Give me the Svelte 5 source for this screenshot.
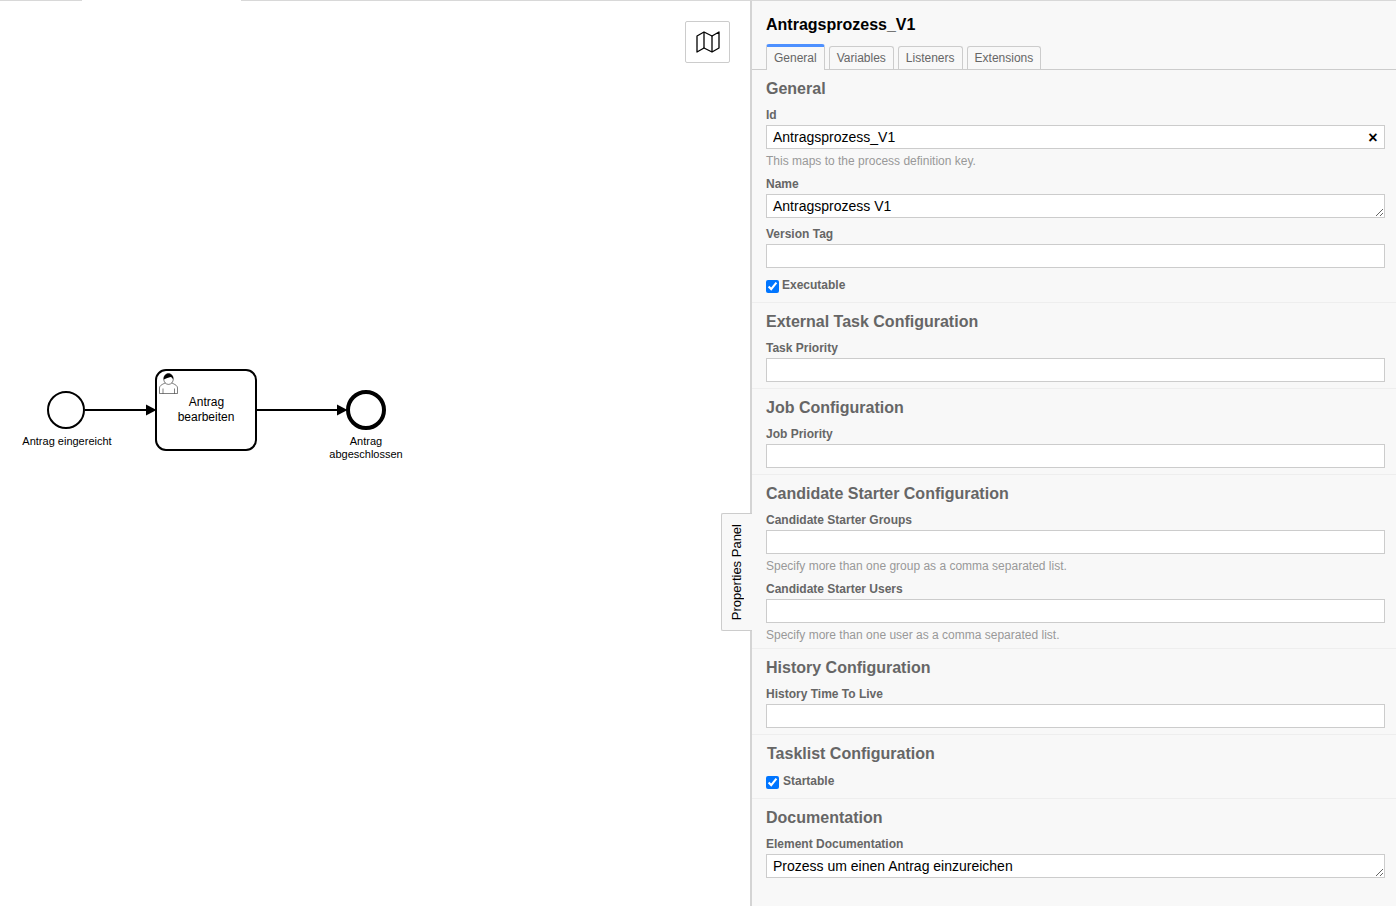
<script lang="ts">
  const tabs = ["General", "Variables", "Listeners", "Extensions"];
</script>

<div class="app">
  <main class="canvas">
    <div class="topline"><span class="seg first"></span><span class="gap"></span><span class="seg"></span></div>

    <svg class="diagram" width="750" height="906" viewBox="0 0 750 906" aria-label="Process diagram">
      <circle cx="66" cy="410" r="18" class="shape" stroke-width="2" />
      <text class="lbl" x="67" y="445">Antrag eingereicht</text>

      <rect x="156" y="370" width="100" height="80" rx="10" class="shape" stroke-width="2" />
      <g class="user">
        <path d="M159.5 393.5 v-5.5 c0 -3 4 -4 6.5 -5.5 h5 c2.5 1.5 6.5 2.5 6.5 5.5 v5.5 z" />
        <path d="M163 388.5 v5 M174.5 388.5 v5" />
        <ellipse cx="168.5" cy="379" rx="4.8" ry="5.4" />
        <path class="hair" d="M163.8 379.5 c-.5 -3.5 2 -6 4.7 -6 c2.7 0 5.2 2.5 4.7 6 c-.8 -1.6 -1.6 -2.4 -2.6 -2.6 c-2 1 -4.6 1 -6.8 2.6 z" />
      </g>
      <text class="lbl task" x="206.5" y="406">Antrag</text>
      <text class="lbl task" x="206" y="421">bearbeiten</text>

      <circle cx="366" cy="410" r="18" class="shape" stroke-width="4" />
      <text class="lbl" x="366" y="445">Antrag</text>
      <text class="lbl" x="366" y="458">abgeschlossen</text>

      <path class="flow" d="M85 410 H147" />
      <path class="head" d="M146 404.5 L156.5 410 L146 415.5 Z" />
      <path class="flow" d="M257 410 H338" />
      <path class="head" d="M337 404.5 L347.5 410 L337 415.5 Z" />
    </svg>

    <button class="map-btn" aria-label="Toggle minimap">
      <svg width="24" height="24" viewBox="0 0 24 24" fill="none" stroke="#000" stroke-width="1.3" stroke-linejoin="round">
        <polygon points="1 6 1 22 8 18 16 22 23 18 23 2 16 6 8 2 1 6" />
        <line x1="8" y1="2" x2="8" y2="18" />
        <line x1="16" y1="6" x2="16" y2="22" />
      </svg>
    </button>
  </main>

  <aside class="panel">
    <div class="toggle"><span>Properties Panel</span></div>

    <h2 class="title">Antragsprozess_V1</h2>

    <nav class="tabs">
      {#each tabs as tab, i}
        <button class="tab" class:active={i === 0}>{tab}</button>
      {/each}
    </nav>

    <section class="group">
      <h3>General</h3>
      <div class="field">
        <label for="f-id">Id</label>
        <div class="clearable">
          <input id="f-id" value="Antragsprozess_V1" />
          <button class="clear" aria-label="Clear">×</button>
        </div>
        <p class="desc">This maps to the process definition key.</p>
      </div>
      <div class="field">
        <label for="f-name">Name</label>
        <textarea id="f-name">Antragsprozess V1</textarea>
      </div>
      <div class="field">
        <label for="f-version">Version Tag</label>
        <input id="f-version" />
      </div>
      <div class="field check">
        <input id="f-exec" type="checkbox" checked />
        <label for="f-exec">Executable</label>
      </div>
    </section>

    <section class="group">
      <h3>External Task Configuration</h3>
      <div class="field">
        <label for="f-task">Task Priority</label>
        <input id="f-task" />
      </div>
    </section>

    <section class="group">
      <h3>Job Configuration</h3>
      <div class="field">
        <label for="f-job">Job Priority</label>
        <input id="f-job" />
      </div>
    </section>

    <section class="group">
      <h3>Candidate Starter Configuration</h3>
      <div class="field">
        <label for="f-groups">Candidate Starter Groups</label>
        <input id="f-groups" />
        <p class="desc">Specify more than one group as a comma separated list.</p>
      </div>
      <div class="field">
        <label for="f-users">Candidate Starter Users</label>
        <input id="f-users" />
        <p class="desc">Specify more than one user as a comma separated list.</p>
      </div>
    </section>

    <section class="group">
      <h3>History Configuration</h3>
      <div class="field">
        <label for="f-ttl">History Time To Live</label>
        <input id="f-ttl" />
      </div>
    </section>

    <section class="group">
      <h3 class="nudge">Tasklist Configuration</h3>
      <div class="field check nudge-label">
        <input id="f-start" type="checkbox" checked />
        <label for="f-start">Startable</label>
      </div>
    </section>

    <section class="group last">
      <h3>Documentation</h3>
      <div class="field">
        <label for="f-doc">Element Documentation</label>
        <textarea id="f-doc">Prozess um einen Antrag einzureichen</textarea>
      </div>
    </section>
  </aside>
</div>

<style>
  :global(body) {
    margin: 0;
    background: #fff;
    font-family: "Liberation Sans", Arial, sans-serif;
  }

  .app {
    display: flex;
    width: 1396px;
    height: 906px;
    overflow: hidden;
  }

  .canvas {
    position: relative;
    flex: 0 0 750px;
    background: #fff;
  }

  .topline { display: flex; height: 1px; }
  .seg { flex: 1; background: #d8d8d8; }
  .seg.first { flex: 0 0 82px; }
  .gap { flex: 0 0 159px; }

  .diagram { position: absolute; left: 0; top: 0; }
  .flow { fill: none; stroke: #000; stroke-width: 2; }
  .head { fill: #000; }
  .shape { fill: #fff; stroke: #000; }
  .lbl {
    font-family: "Liberation Sans", Arial, sans-serif;
    font-size: 11px;
    text-anchor: middle;
    fill: #000;
  }
  .lbl.task { font-size: 12px; }
  .user path, .user ellipse { fill: #fff; stroke: #000; stroke-width: .5; }
  .user .hair { fill: #000; stroke: none; }

  .map-btn {
    position: absolute;
    left: 685px;
    top: 21px;
    width: 45px;
    height: 42px;
    display: flex;
    align-items: center;
    justify-content: center;
    padding: 0;
    background: #fff;
    border: 1px solid #ccc;
    border-radius: 2px;
  }

  .panel {
    position: relative;
    flex: 1;
    box-sizing: border-box;
    background: #f8f8f8;
    border-left: 2px solid #d4d4d4;
    border-top: 1px solid #d8d8d8;
    padding-top: 14px;
  }

  .toggle {
    position: absolute;
    left: -31px;
    top: 512px;
    box-sizing: border-box;
    width: 31px;
    height: 118px;
    display: flex;
    align-items: center;
    justify-content: center;
    padding-right: 2px;
    background: #f8f8f8;
    border: 1px solid #ccc;
    border-right: 0;
    border-radius: 2px 0 0 2px;
    color: #000;
    font-size: 13px;
  }
  .toggle span { writing-mode: vertical-rl; transform: rotate(180deg); }
  /* hides the panel's own border behind the tab */
  .toggle::after {
    content: "";
    position: absolute;
    right: -2px;
    top: 0;
    bottom: 0;
    width: 2px;
    background: #f8f8f8;
  }

  .title {
    margin: 0 0 9px 14px;
    font-size: 16px;
    line-height: 20px;
    font-weight: 700;
    color: #000;
  }

  .tabs {
    display: flex;
    align-items: flex-end;
    gap: 4px;
    height: 26px;
    box-sizing: border-box;
    padding-left: 14px;
    border-bottom: 1px solid #ccc;
  }

  .tab {
    box-sizing: border-box;
    height: 23px;
    padding: 0 7px;
    background: #f8f8f8;
    border: 1px solid #ccc;
    border-bottom: 0;
    border-radius: 3px 3px 0 0;
    color: #666;
    font: 12px/20px "Liberation Sans", Arial, sans-serif;
  }
  .tab.active {
    height: 26px;
    margin-bottom: -1px;
    padding-bottom: 1px;
    border-top: 3px solid #4d90ff;
  }

  .group {
    padding: 9px 11px 6px 14px;
    border-bottom: 1px solid #eee;
  }
  .group.last { border-bottom: 0; }

  h3 {
    margin: 0 0 7px;
    font-size: 16px;
    line-height: 20px;
    font-weight: 700;
    color: #666;
  }
  h3.nudge { padding-left: 1px; }

  .field { margin-top: 7px; }
  .field label {
    display: block;
    margin-bottom: 2px;
    padding-top: 1px;
    font-size: 12px;
    line-height: 16px;
    font-weight: 700;
    color: #666;
  }

  .field input:not([type="checkbox"]), .field textarea {
    display: block;
    box-sizing: border-box;
    width: 100%;
    height: 24px;
    margin: 0;
    padding: 3px 6px;
    background: #fff;
    border: 1px solid #ccc;
    border-radius: 0;
    color: #000;
    font: 14px/16px "Liberation Sans", Arial, sans-serif;
    outline: none;
  }
  .field textarea { resize: vertical; overflow: hidden; }

  .clearable { position: relative; }
  .clear {
    position: absolute;
    right: 6px;
    top: 4px;
    width: 12px;
    height: 18px;
    padding: 0;
    border: 0;
    background: none;
    color: #000;
    font: 700 16px/18px "Liberation Sans", Arial, sans-serif;
  }

  .desc {
    margin: 4px 0 -1px;
    font-size: 12px;
    line-height: 16px;
    color: #999;
  }

  .check {
    display: flex;
    padding: 5px 0 3px;
  }
  .check input { width: 13px; height: 13px; margin: 0; flex: none; }
  .check label {
    margin: -3px 0 0 3px;
    padding-top: 0;
    height: 13px;
    line-height: 16px;
  }
  .nudge-label label { margin-left: 4px; }
</style>
